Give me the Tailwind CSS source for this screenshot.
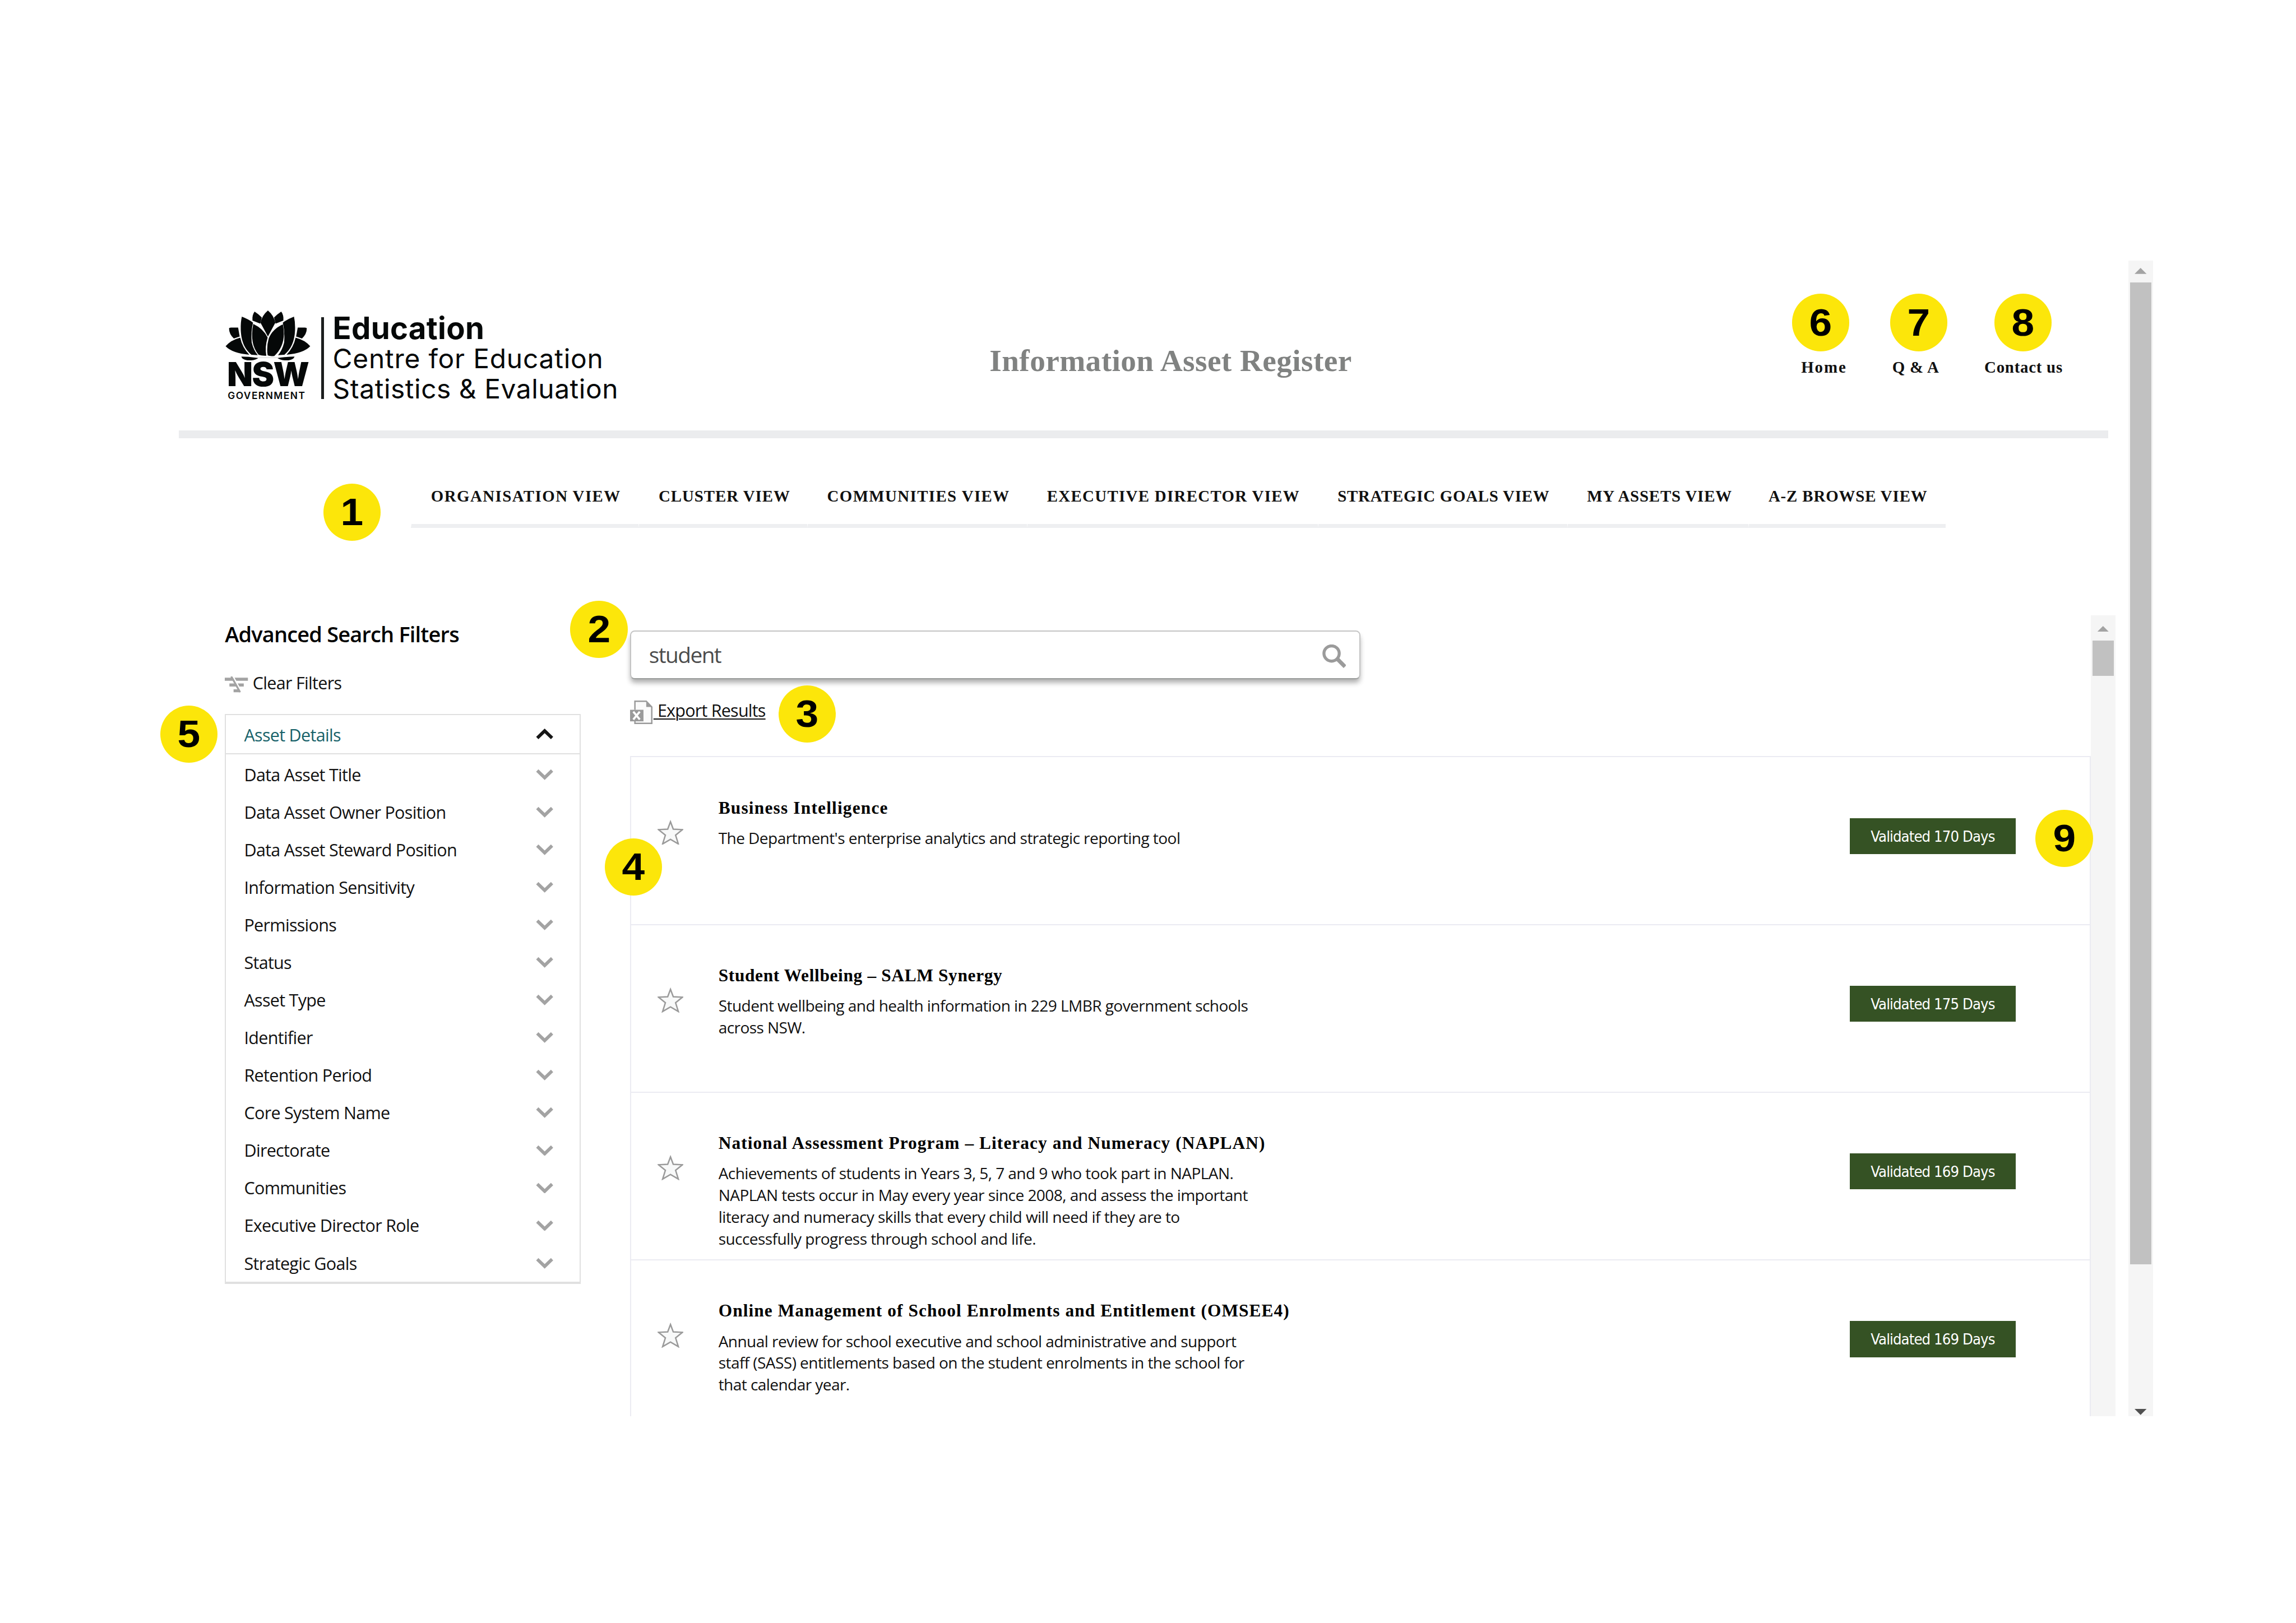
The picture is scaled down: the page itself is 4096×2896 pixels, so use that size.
<!DOCTYPE html>
<html lang="en">
<head>
<meta charset="utf-8">
<title>Information Asset Register</title>
<script src="https://cdn.jsdelivr.net/npm/@tailwindcss/browser@4"></script>
</head>
<body class="bg-white overflow-hidden">
<div class="relative w-[4961px] h-[3508px] overflow-hidden bg-white text-[#111] font-['Open_Sans',sans-serif] [zoom:0.82564]">

  <div class="ml-[386px] mt-[563px] w-[4266px] h-[2498px] flex overflow-hidden">
    <div class="w-[4185px] shrink-0">

      <!-- Header -->
      <header class="w-[4169px] h-[384px] border-b-[18px] border-[#ebecee] relative flex justify-between">
        <div class="flex pl-[101px] pt-[108px] text-[#050808] font-['Inter',sans-serif]">
          <div class="w-[207px]">
            <svg class="block w-[184px] h-[108px]" viewBox="30 93 320 324" preserveAspectRatio="none" fill="#050808">
              <g id="side">
                <path d="M140 100Q156 118 167 138L161 178L132 158Q130 122 140 100Z"/>
                <path d="M44 211Q44 204 51 204H78L84 262L62 275Q44 245 44 211Z"/>
                <path d="M31 325Q50 285 86 269Q93 330 120 380Q55 370 31 325Z"/>
                <path d="M92 133Q118 150 134 172Q126 230 129 300Q136 350 152 383L128 380C105 345 90 300 88 220Q87 170 92 133Z"/>
                <path d="M90 392Q115 392 154 401Q143 418 115 417Q93 412 90 392Z"/>
              </g>
              <use href="#side" transform="translate(380 0) scale(-1 1)"/>
              <path d="M190 93Q212 125 218 172L190 262L162 172Q168 125 190 93Z"/>
              <path d="M135 180Q172 210 189 268Q178 330 184 386Q168 388 155 380Q120 310 135 180Z"/>
              <path d="M246 183Q206 215 193 275Q184 330 189 384Q198 392 214 388Q262 310 246 183Z"/>
              <path d="M154 399H226" stroke="#bbb" stroke-width="3"/>
            </svg>
            <div class="pl-[4px] mt-[4px] h-[51px] leading-[51px] text-[72px] font-black tracking-[-2px] whitespace-nowrap">NSW</div>
            <div class="pl-[5px] mt-[11px] h-[20px] leading-[20px] text-[21px] font-semibold tracking-[1.8px] whitespace-nowrap">GOVERNMENT</div>
          </div>
          <div class="w-[6px] h-[177px] mt-[15px] bg-[#1c1e1e]"></div>
          <div class="pl-[19px] pt-[5px] whitespace-nowrap">
            <div class="h-[67px] leading-[67px] text-[66px] font-bold tracking-[0.4px]">Education</div>
            <div class="h-[66px] leading-[66px] text-[58px] tracking-[0.95px]">Centre for Education</div>
            <div class="h-[65px] leading-[65px] text-[58px] tracking-[0.65px]">Statistics &amp; Evaluation</div>
          </div>
        </div>
        <h1 class="absolute left-[1752px] top-[177px] leading-[80px] text-[67px] font-bold tracking-[0.5px] whitespace-nowrap text-[#808281] font-['Liberation_Serif',serif]">Information Asset Register</h1>
        <div class="flex pt-[206px] pr-[98px] leading-[50px] text-[35px] font-bold whitespace-nowrap font-['Liberation_Serif',serif]">
          <a class="w-[197px] tracking-[2.4px]">Home</a>
          <a class="w-[199px] tracking-[0.9px]">Q &amp; A</a>
          <a class="tracking-[0.9px]">Contact us</a>
        </div>
      </header>

      <!-- Views -->
      <nav id="tabs" class="ml-[502px] mt-[65px] flex leading-[121px] text-[35px] font-bold whitespace-nowrap font-['Liberation_Serif',serif]"></nav>

      <!-- Filters and results -->
      <div class="mt-[189px] h-[1732px] flex pl-[100px]">
        <aside class="w-[769px] shrink-0 pt-[10px]">
          <h2 class="leading-[60px] text-[46px] font-semibold tracking-[-1px] whitespace-nowrap text-black">Advanced Search Filters</h2>
          <div class="mt-[51px] h-[50px] flex items-center text-[37px] tracking-[-0.85px]">
            <svg class="w-[50px] h-[36px] mr-[10px] mt-[6px]" viewBox="0 0 50 36">
              <path d="M0 6H50M10 18.500H41M19 31H34" stroke="#a3a3a3" stroke-width="6.500"/>
              <path d="M18 0L36 33" stroke="#fff" stroke-width="3"/>
              <path d="M14 0L33 34" stroke="#a3a3a3" stroke-width="4"/>
            </svg>
            <span>Clear Filters</span>
          </div>
          <div class="mt-[42px] border-[3px] border-b-[5px] border-[#e0e0e0] text-[37px] tracking-[-0.85px]">
            <div class="h-[85px] border-b-[3px] border-[#e0e0e0] pl-[39px] pr-[57px] flex items-center justify-between text-[#18626a]">
              <span class="pt-[4px]">Asset Details</span>
              <svg class="w-[38px] h-[24px] mt-[-1px]" viewBox="0 0 38 24"><path d="M3 20.500L19 5L35 20.500" fill="none" stroke="#161616" stroke-width="7"/></svg>
            </div>
            <div id="filters" class="pt-[2px]"></div>
          </div>
        </aside>

        <main class="ml-[106px] w-[3157px] shrink-0 pt-[32px]">
          <div class="w-[1578px] h-[105px] flex items-center justify-between pl-[39px] pr-[28px] rounded-[10px] border-[3px] border-[#c4c4c4] border-b-[#9b9d9c] shadow-[0_9px_12px_-2px_rgba(0,0,0,0.33)] bg-white text-[47px] tracking-[-1.9px] text-[#4c4c4c]">
            <span>student</span>
            <svg class="w-[52px] h-[51px] mt-[8px]" viewBox="0 0 52 51" fill="none" stroke="#9b9b9b"><circle cx="20" cy="19.500" r="16.500" stroke-width="6.500"/><path d="M32 31L49 48" stroke-width="8.500"/></svg>
          </div>
          <div class="mt-[46px] h-[51px] flex items-center text-[37px] tracking-[-0.95px]">
            <svg class="w-[49px] h-[51px]" viewBox="0 0 49 51">
              <path d="M10.500 20V1.500H35L47 14V49.500H10.500V44" fill="#fafafa" stroke="#9a9a9a" stroke-width="3"/>
              <path d="M35 1V14H47Z" fill="#9a9a9a"/>
              <path d="M0 20H29V45H0Z" fill="#9a9a9a"/>
              <path d="M7 24L21 41M21 24L7 41" stroke="#fff" stroke-width="4.500"/>
            </svg>
            <a class="whitespace-pre underline decoration-[3px] underline-offset-[4px] ml-[2px] leading-[50px] mt-[-6px]"> Export Results</a>
          </div>
          <div id="results" class="mt-[70px] border-x-[3px] border-[#ebebf2]"></div>
        </main>

        <div class="w-[53px] shrink-0 bg-[#f5f5f5] flex flex-col items-center">
          <svg class="mt-[22px] w-[26px] h-[13px]" viewBox="0 0 26 13"><path d="M0 13L13 0L26 13Z" fill="#a3a3a3"/></svg>
          <div class="mt-[19px] w-[47px] h-[76px] bg-[#c1c1c1]"></div>
        </div>
      </div>
    </div>

    <div class="ml-[28px] w-[53px] shrink-0 bg-[#f5f5f5] flex flex-col items-center">
      <svg class="mt-[16px] w-[26px] h-[13px]" viewBox="0 0 26 13"><path d="M0 13L13 0L26 13Z" fill="#a3a3a3"/></svg>
      <div class="mt-[18px] w-[47px] h-[2122px] bg-[#c1c1c1]"></div>
      <svg class="mt-auto mb-[3px] w-[26px] h-[13px]" viewBox="0 0 26 13"><path d="M0 0L13 13L26 0Z" fill="#505050"/></svg>
    </div>
  </div>

  <div id="badges" class="text-black font-['Liberation_Sans',sans-serif]"></div>
</div>

<script>
const tabs = [["ORGANISATION VIEW",492,1.75],["CLUSTER VIEW",364,1.15],["COMMUNITIES VIEW",475,1.7],["EXECUTIVE DIRECTOR VIEW",628,1.6],["STRATEGIC GOALS VIEW",539,0.9],["MY ASSETS VIEW",392,1.0],["A-Z BROWSE VIEW",426,1.05]];
document.getElementById('tabs').innerHTML = tabs.map(([t,w,s]) =>
  `<a class="block pl-[42px] border-b-[9px] border-[#eeeff1] border-l border-l-white" style="width:${w}px;letter-spacing:${s}px">${t}</a>`).join('');

const filters = ["Data Asset Title","Data Asset Owner Position","Data Asset Steward Position","Information Sensitivity","Permissions","Status","Asset Type","Identifier","Retention Period","Core System Name","Directorate","Communities","Executive Director Role","Strategic Goals"];
document.getElementById('filters').innerHTML = filters.map(t =>
  `<div class="h-[81.25px] pl-[39px] pr-[57px] flex items-center justify-between whitespace-nowrap"><span class="pt-[2px]">${t}</span><svg class="w-[38px] h-[24px]" viewBox="0 0 38 24"><path d="M3 3.500L19 19L35 3.500" fill="none" stroke="#a3a3a3" stroke-width="7"/></svg></div>`).join('');

const results = [
  ["Business Intelligence",["The Department's enterprise analytics and strategic reporting tool"],170,1.45],
  ["Student Wellbeing – SALM Synergy",["Student wellbeing and health information in 229 LMBR government schools","across NSW."],175,0.8],
  ["National Assessment Program – Literacy and Numeracy (NAPLAN)",["Achievements of students in Years 3, 5, 7 and 9 who took part in NAPLAN.","NAPLAN tests occur in May every year since 2008, and assess the important","literacy and numeracy skills that every child will need if they are to","successfully progress through school and life."],169,1.3],
  ["Online Management of School Enrolments and Entitlement (OMSEE4)",["Annual review for school executive and school administrative and support","staff (SASS) entitlements based on the student enrolments in the school for","that calendar year."],169,1.3]
];
document.getElementById('results').innerHTML = results.map(([t,d,n,s]) =>
  `<div class="h-[362.4px] border-t-[3px] border-[#ebebf2] flex items-start">
    <svg class="ml-[57px] mt-[135px] w-[56px] h-[54px] shrink-0" viewBox="0 0 56 54"><path d="M28 4L34 20L54 21L39 33L45 52L28 42L11 52L17 33L2 21L22 20Z" fill="#f8f9f9" stroke="#9a9a9a" stroke-width="3"/></svg>
    <div class="ml-[76px] pt-[84px] whitespace-nowrap">
      <h3 class="leading-[50px] text-[38px] font-bold text-black font-['Liberation_Serif',serif]" style="letter-spacing:${s}px">${t}</h3>
      <p class="mt-[17px] leading-[47px] text-[34px] tracking-[-0.7px]">${d.join('<br>')}</p>
    </div>
    <div class="ml-auto mr-[160px] mt-[131px] w-[359px] h-[78px] leading-[80px] bg-[#355224] text-white text-center text-[33px] tracking-[-1.1px] whitespace-nowrap font-['DejaVu_Sans_Condensed','DejaVu_Sans',sans-serif]">Validated ${n} Days</div>
  </div>`).join('');

const badges = [[761,1107],[1294,1360],[1744,1543],[1369,1874],[408,1587],[3934,697],[4146,697],[4371,697],[4460,1812]];
document.getElementById('badges').innerHTML = badges.map(([x,y],i) =>
  `<div class="absolute w-[124px] h-[124px] rounded-full bg-[#fce60a] flex items-center justify-center text-[82px] leading-none font-bold" style="left:${x-62}px;top:${y-62}px"><span class="scale-x-[1.08]">${i+1}</span></div>`).join('');
</script>
</body>
</html>
